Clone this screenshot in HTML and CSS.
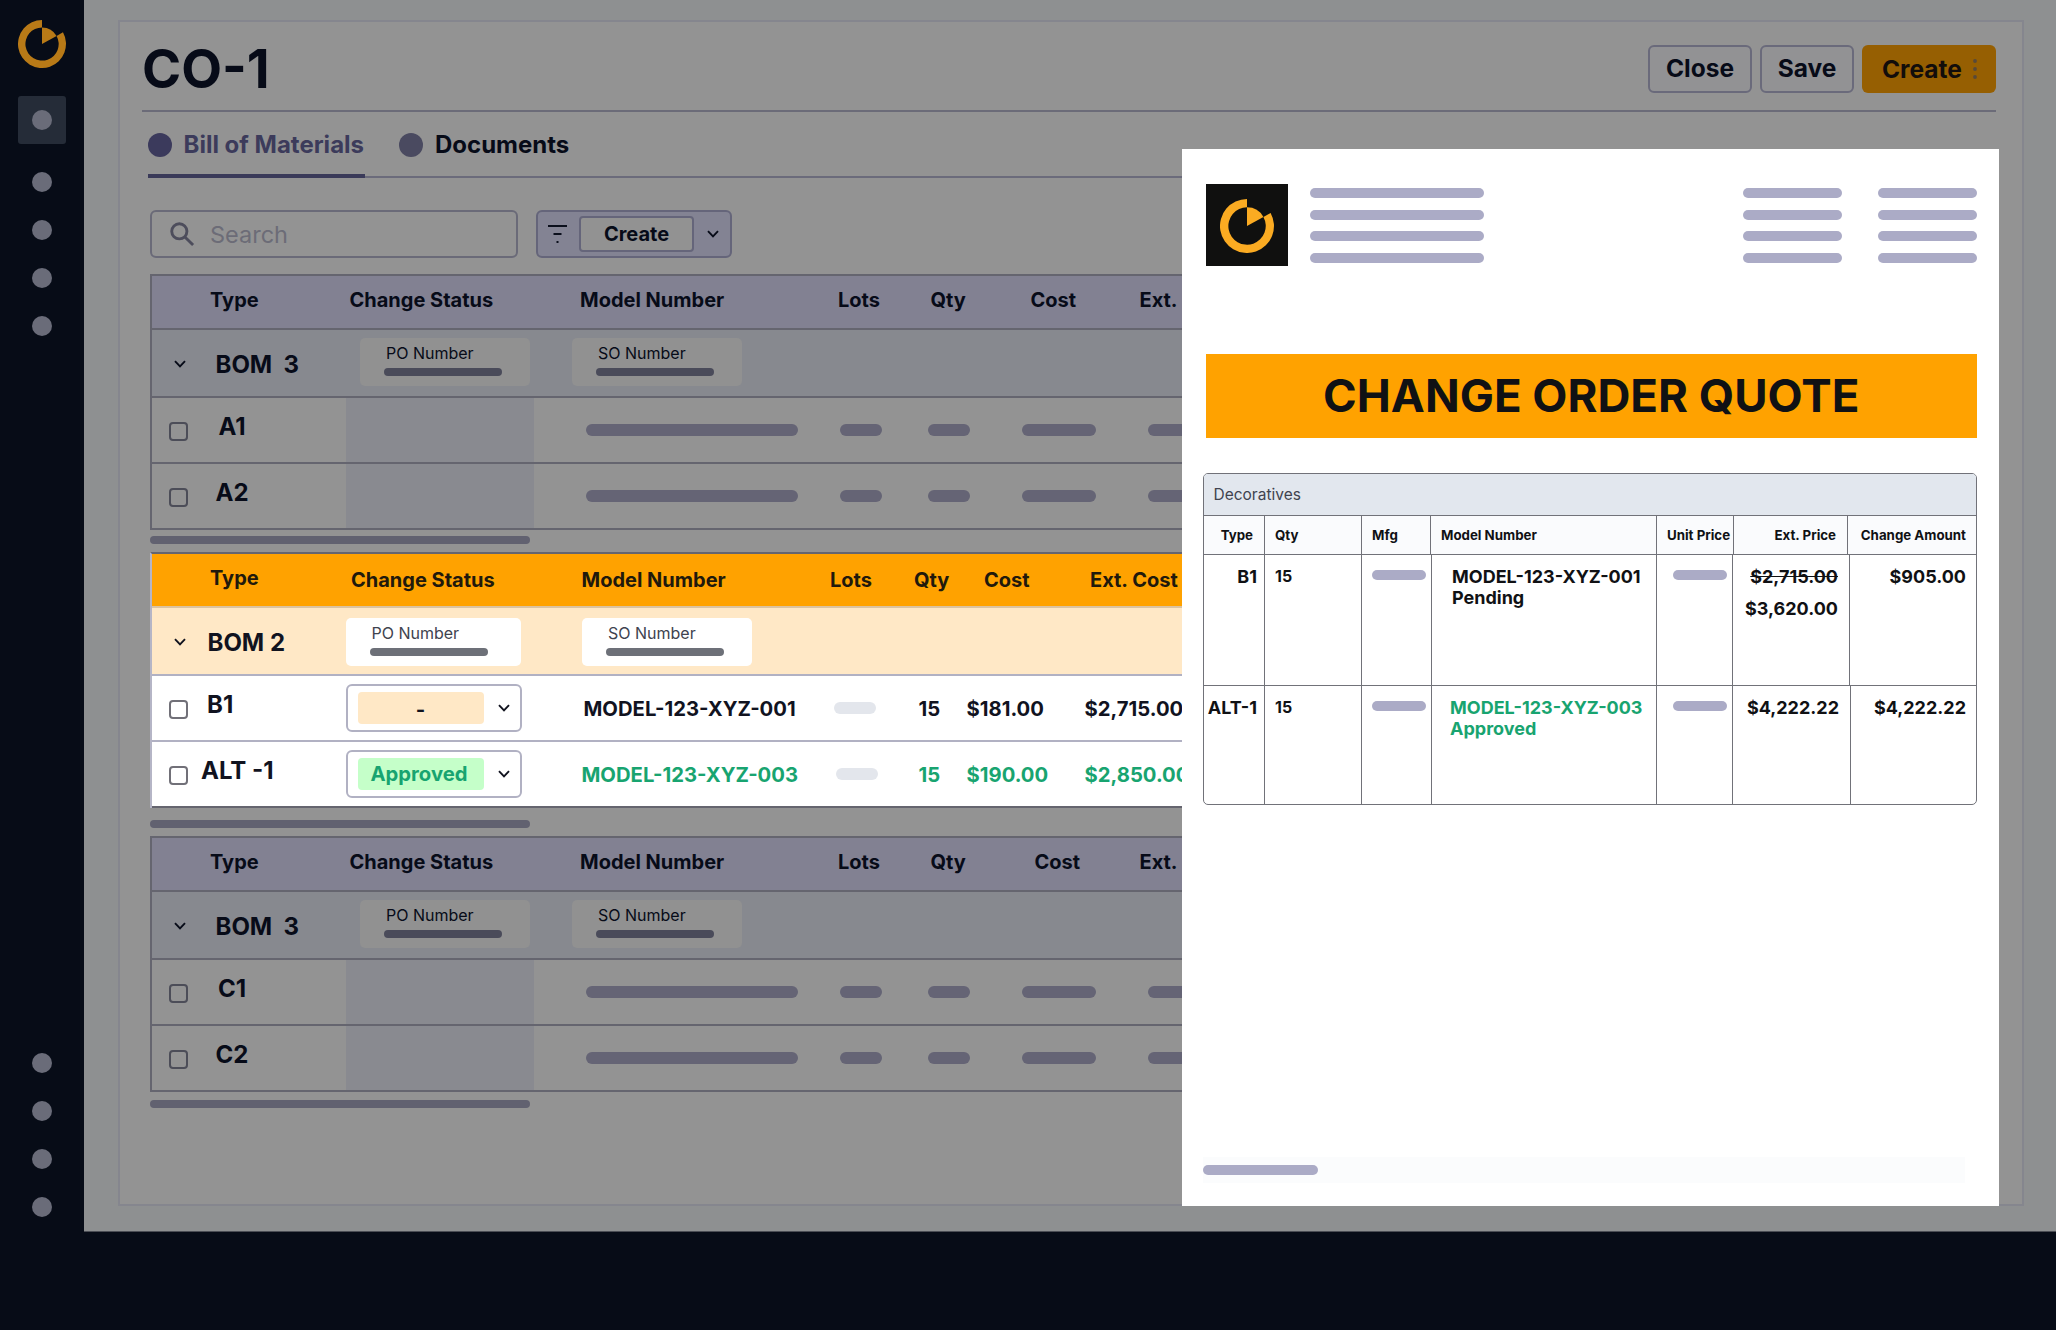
FILE: index.html
```html
<!DOCTYPE html>
<html lang="en">
<head>
    <meta charset="UTF-8">
    <meta name="viewport" content="width=device-width, initial-scale=1.0">
    <title>CO-1</title>
    <link rel="stylesheet" href="styles.css">
</head>
<body>
    <!-- Shared icons -->
    <svg class="sprite" width="0" height="0">
        <symbol id="logo" viewBox="0 0 54 54">
            <path d="M50.6 13.9A27 27 0 1 1 27 0V8.3A18.7 18.7 0 1 0 43.4 17.9Z"/>
            <path d="M27 27V8.3A18.7 18.7 0 0 1 43.4 17.9Z"/>
        </symbol>
        <symbol id="chevron" viewBox="0 0 12 8">
            <path d="M1 1.2L6 6.4L11 1.2" fill="none" stroke="currentColor" stroke-width="1.9"/>
        </symbol>
    </svg>

    <div class="app">
        <nav class="sidebar">
            <svg class="logo"><use href="#logo"/></svg>
            <div class="nav-item active"><span class="dot"></span></div>
            <div class="nav-top">
                <span class="dot"></span>
                <span class="dot"></span>
                <span class="dot"></span>
                <span class="dot"></span>
            </div>
            <div class="nav-bottom">
                <span class="dot"></span>
                <span class="dot"></span>
                <span class="dot"></span>
                <span class="dot"></span>
            </div>
        </nav>

        <main class="main">
            <div class="card">
                <header class="header">
                    <h1>CO-1</h1>
                    <div class="actions">
                        <button class="btn btn-close">Close</button>
                        <button class="btn btn-save">Save</button>
                        <button class="btn btn-create">Create
                            <svg class="dots" viewBox="0 0 4 22"><circle cx="2" cy="3" r="1.9"/><circle cx="2" cy="11" r="1.9"/><circle cx="2" cy="19" r="1.9"/></svg>
                        </button>
                    </div>
                </header>

                <div class="tabs">
                    <div class="tab selected"><span class="tab-dot"></span>Bill of Materials</div>
                    <div class="tab"><span class="tab-dot"></span>Documents</div>
                </div>

                <div class="toolbar">
                    <div class="search">
                        <svg class="search-icon" viewBox="0 0 26 26"><circle cx="9.7" cy="9.7" r="7.9"/><path d="M15.5 15.5L24 24"/></svg>
                        <span>Search</span>
                    </div>
                    <div class="filter">
                        <svg class="filter-icon" viewBox="0 0 20 20"><path d="M0 2H19M5.500 10H13.500M8.500 18H10.500"/></svg>
                        <div class="filter-value">Create</div>
                        <svg class="chevron"><use href="#chevron"/></svg>
                    </div>
                </div>

                <section class="bom">
                    <div class="row head">
                        <span>Type</span><span>Change Status</span><span>Model Number</span><span>Lots</span><span>Qty</span><span>Cost</span><span>Ext.</span>
                    </div>
                    <div class="row group">
                        <svg class="chevron"><use href="#chevron"/></svg>
                        <span class="name">BOM  3</span>
                        <div class="number"><span>PO Number</span><i></i></div>
                        <div class="number"><span>SO Number</span><i></i></div>
                    </div>
                    <div class="row item">
                        <span class="check"></span><span class="name">A1</span><span class="blank"></span>
                        <i class="pill"></i><i class="pill"></i><i class="pill"></i><i class="pill"></i><i class="pill"></i>
                    </div>
                    <div class="row item">
                        <span class="check"></span><span class="name">A2</span><span class="blank"></span>
                        <i class="pill"></i><i class="pill"></i><i class="pill"></i><i class="pill"></i><i class="pill"></i>
                    </div>
                </section>
                <div class="scroll"></div>

                <section class="bom current">
                    <div class="row head">
                        <span class="type">Type</span><span>Change Status</span><span>Model Number</span><span>Lots</span><span>Qty</span><span>Cost</span><span>Ext. Cost</span>
                    </div>
                    <div class="row group">
                        <svg class="chevron"><use href="#chevron"/></svg>
                        <span class="name">BOM 2</span>
                        <div class="number po"><span>PO Number</span><i></i></div>
                        <div class="number"><span>SO Number</span><i></i></div>
                    </div>
                    <div class="row item">
                        <span class="check"></span><span class="name">B1</span>
                        <div class="select"><span class="status none">-</span><svg class="chevron"><use href="#chevron"/></svg></div>
                        <span>MODEL-123-XYZ-001</span><i class="pill"></i><span>15</span><span>$181.00</span><span>$2,715.00</span>
                    </div>
                    <div class="row item alt">
                        <span class="check"></span><span class="name">ALT -1</span>
                        <div class="select"><span class="status">Approved</span><svg class="chevron"><use href="#chevron"/></svg></div>
                        <span class="model">MODEL-123-XYZ-003</span><i class="pill"></i><span>15</span><span>$190.00</span><span>$2,850.00</span>
                    </div>
                </section>
                <div class="scroll scroll-current"></div>

                <section class="bom last">
                    <div class="row head">
                        <span>Type</span><span>Change Status</span><span>Model Number</span><span>Lots</span><span>Qty</span><span>Cost</span><span>Ext.</span>
                    </div>
                    <div class="row group">
                        <svg class="chevron"><use href="#chevron"/></svg>
                        <span class="name">BOM  3</span>
                        <div class="number"><span>PO Number</span><i></i></div>
                        <div class="number"><span>SO Number</span><i></i></div>
                    </div>
                    <div class="row item">
                        <span class="check"></span><span class="name">C1</span><span class="blank"></span>
                        <i class="pill"></i><i class="pill"></i><i class="pill"></i><i class="pill"></i><i class="pill"></i>
                    </div>
                    <div class="row item">
                        <span class="check"></span><span class="name">C2</span><span class="blank"></span>
                        <i class="pill"></i><i class="pill"></i><i class="pill"></i><i class="pill"></i><i class="pill"></i>
                    </div>
                </section>
                <div class="scroll scroll-last"></div>
            </div>
        </main>
    </div>

    <!-- Quote preview -->
    <aside class="quote">
        <div class="quote-top">
            <div class="quote-logo"><svg><use href="#logo"/></svg></div>
            <div class="lines lines-wide"><i></i><i></i><i></i><i></i></div>
            <div class="lines lines-right"><i></i><i></i><i></i><i></i></div>
            <div class="lines"><i></i><i></i><i></i><i></i></div>
        </div>
        <h2 class="banner">CHANGE ORDER QUOTE</h2>
        <div class="quote-table">
            <div class="caption">Decoratives</div>
            <div class="quote-row quote-head">
                <div class="type">Type</div><div>Qty</div><div>Mfg</div><div>Model Number</div><div>Unit Price</div><div class="amount">Ext. Price</div><div class="amount">Change Amount</div>
            </div>
            <div class="quote-row first">
                <div class="type">B1</div>
                <div class="qty">15</div>
                <div><i class="bar"></i></div>
                <div class="model">MODEL-123-XYZ-001<br>Pending</div>
                <div class="unit"><i class="bar"></i></div>
                <div class="amount"><s>$2,715.00</s><span class="new-price">$3,620.00</span></div>
                <div class="amount">$905.00</div>
            </div>
            <div class="quote-row second">
                <div class="type">ALT-1</div>
                <div class="qty">15</div>
                <div><i class="bar"></i></div>
                <div class="model approved">MODEL-123-XYZ-003<br>Approved</div>
                <div class="unit"><i class="bar"></i></div>
                <div class="amount">$4,222.22</div>
                <div class="amount">$4,222.22</div>
            </div>
        </div>
        <div class="quote-scroll"><i></i></div>
    </aside>
</body>
</html>
```
FILE: styles.css
```css
* {
    box-sizing: border-box;
}
body {
    margin: 0;
    height: 1330px;
    overflow: hidden;
    position: relative;
    background-color: #070c17;
    color: #070b18;
    font-family: Inter, sans-serif;
    font-weight: 700;
    font-optical-sizing: none;
}
h1, h2 {
    margin: 0;
    font-weight: 700;
}
.sprite {
    display: block;
}
.app {
    display: flex;
    height: 1232px;
}

/* Sidebar */
.sidebar {
    width: 84px;
    padding: 20px 0 15px;
    display: flex;
    flex-direction: column;
    align-items: center;
}
.logo {
    width: 48px;
    height: 48px;
    fill: #b87a17;
}
.nav-item {
    width: 48px;
    height: 48px;
    margin-top: 28px;
    border-radius: 3px;
    background-color: #252c38;
    display: flex;
    align-items: center;
    justify-content: center;
}
.dot {
    width: 20px;
    height: 20px;
    border-radius: 50%;
    background-color: #6a6c79;
}
.nav-top, .nav-bottom {
    display: flex;
    flex-direction: column;
    gap: 28px;
}
.nav-top {
    margin-top: 28px;
}
.nav-bottom {
    margin-top: auto;
}

/* Main card */
.main {
    flex: 1;
    padding: 20px 32px 26px 34px;
    background-color: #8e9091;
    border-bottom: 1px solid #4b4e55;
}
.card {
    height: 1186px;
    border: 2px solid #85868e;
    background-color: #939393;
}
.header {
    display: flex;
    justify-content: space-between;
    height: 90px;
    margin: 0 26px 0 22px;
    border-bottom: 2px solid #6b6b78;
}
.header h1 {
    font-size: 53px;
    line-height: 95px;
}
.actions {
    display: flex;
    gap: 8px;
    padding-top: 23px;
}
.btn {
    height: 48px;
    padding: 0 0 3px;
    border: 2px solid #6a6a7b;
    border-radius: 6px;
    background-color: #929294;
    color: #070b18;
    font: 700 24.500px Inter, sans-serif;
    font-optical-sizing: none;
}
.btn-close {
    width: 104px;
}
.btn-save {
    width: 94px;
}
.btn-create {
    width: 134px;
    padding: 0 0 0 20px;
    border: none;
    background-color: #965f02;
    color: #120d0b;
    display: flex;
    align-items: center;
}
.dots {
    width: 4px;
    height: 22px;
    margin-left: 11px;
    fill: #57493a;
}

.tabs {
    display: flex;
    height: 66px;
    margin: 0 26px 0 27.5px;
    font-size: 24px;
    border-bottom: 2px solid #6b6b7b;
}
.tab {
    display: flex;
    height: 66px;
    align-items: center;
    gap: 12px;
    margin-right: 34px;
    border-bottom: 4px solid transparent;
    padding-top: 3px;
}
.tab.selected {
    width: 217.5px;
    white-space: nowrap;
    color: #3c3b5b;
    border-color: #3a3a59;
}
.tab-dot {
    width: 24px;
    height: 24px;
    border-radius: 50%;
    background-color: #4a4a60;
}
.selected .tab-dot {
    background-color: #3b3a5c;
}

.toolbar {
    display: flex;
    gap: 18px;
    margin: 32px 0 16px 30px;
}
.search {
    display: flex;
    align-items: center;
    gap: 15px;
    width: 368px;
    height: 48px;
    padding-left: 18px;
    border: 2px solid #6a6a78;
    border-radius: 6px;
    color: #6c6c77;
    font-size: 23.500px;
    font-weight: 400;
}
.search-icon {
    width: 25px;
    height: 25px;
    fill: none;
    stroke: #4d4d5c;
    stroke-width: 3;
}
.filter {
    display: flex;
    align-items: center;
    width: 196px;
    height: 48px;
    padding-left: 10px;
    border: 2px solid #65657a;
    border-radius: 6px;
    background-color: #838393;
}
.filter-icon {
    width: 20px;
    height: 20px;
    stroke: #0b0f1c;
    stroke-width: 2;
}
.filter-value {
    width: 115px;
    height: 36px;
    margin: 0 13px 0 11px;
    border: 2px solid #65657a;
    border-radius: 4px;
    background-color: #929292;
    font-size: 20px;
    line-height: 32px;
    text-align: center;
}
.chevron {
    width: 12px;
    height: 8px;
    flex: none;
}

/* Bill of materials tables */
.bom {
    margin: 0 26px 0 30px;
    border: 2px solid #65656f;
    border-bottom: none;
}
.row {
    display: grid;
    align-items: center;
    height: 66px;
    border-bottom: 2px solid #65656f;
    white-space: pre;
    overflow: hidden;
}
.head {
    height: 54px;
    padding: 0 0 4px 58px;
    grid-template-columns: 139.5px 230.5px 258px 92.5px 100px 109px auto;
    background-color: #828192;
    font-size: 20px;
}
.last .head {
    grid-template-columns: 139.5px 230.5px 258px 92.5px 104px 105px auto;
}
.group {
    height: 68px;
    padding-left: 22px;
    grid-template-columns: 41.5px 144.5px 212px auto;
    background-color: #87898f;
}
.group .chevron {
    width: 12px;
    margin-top: 2px;
}
.name {
    font-size: 24px;
}
.group .name {
    padding-top: 3px;
}
.number {
    width: 170px;
    height: 48px;
    margin-top: -3px;
    padding: 5px 0 0 24px;
    border-radius: 5px;
    background-color: #919191;
    font-size: 16px;
    font-weight: 400;
    line-height: 20px;
}
.number span {
    display: block;
    padding-left: 2px;
}
.number i {
    display: block;
    width: 118px;
    height: 8px;
    margin-top: 5px;
    border-radius: 4px;
    background-color: #4a4b5a;
}
.item {
    padding-left: 17px;
    grid-template-columns: 33px 143.5px 240.5px 254px 88px 94px 126px auto;
}
.check {
    width: 19px;
    height: 19px;
    margin-top: 2px;
    border: 2px solid #4c4d58;
    border-radius: 4px;
}
.item .name {
    width: 60px;
    margin-top: -8px;
    text-align: center;
}
.blank {
    align-self: stretch;
    width: 188.5px;
    background-color: #898a90;
}
.pill {
    width: 42px;
    height: 12px;
    border-radius: 6px;
    background-color: #656475;
}
.blank + .pill {
    width: 212px;
}
.pill:nth-child(7), .pill:nth-child(8) {
    width: 74px;
}
.scroll {
    width: 380px;
    height: 8px;
    margin: 6px 0 8px 30px;
    border-radius: 4px;
    background-color: #616170;
}
.scroll-current {
    margin-top: 12px;
}
.scroll-last {
    margin-top: 8px;
}

/* Highlighted table */
.current {
    border-left-color: #b5b5c6;
    background-color: #fff;
    color: #11131f;
}
.current .row {
    border-color: #b1b1c3;
}
.current .row:last-child {
    border-color: #65656f;
}
.current .head {
    padding-bottom: 0;
    grid-template-columns: 141px 230.5px 248.5px 84px 70px 106px auto;
    background-color: #ffa200;
    border-color: #dcc3a0;
    color: #21190c;
}
.head .type {
    margin-top: -4px;
}
.current .group {
    grid-template-columns: 33.5px 138px 236.5px auto;
    background-color: #ffe8c6;
}
.current .number {
    margin-top: 2px;
    background-color: #fff;
    color: #40434f;
}
.current .po {
    width: 175px;
}
.current .number i {
    background-color: #6d7078;
}
.current .item {
    grid-template-columns: 38px 138.5px 238px 250.5px 84.500px 48px 118px auto;
    font-size: 20.250px;
}
.current .check {
    border-color: #717078;
}
.current .item .name {
    text-align: left;
}
.select {
    display: flex;
    align-items: center;
    width: 176px;
    height: 48px;
    padding-left: 10px;
    border: 2px solid #b1b1c3;
    border-radius: 6px;
}
.status {
    width: 126px;
    height: 32px;
    margin-right: 14px;
    padding-right: 3px;
    border-radius: 4px;
    background-color: #c5ffc9;
    color: #16a36d;
    line-height: 32px;
    text-align: center;
}
.status.none {
    padding: 2px 0 0;
    background-color: #ffe8c6;
    color: #11131f;
}
.current .pill {
    background-color: #e3e6ec;
}
.alt > span, .alt .status {
    color: #18a470;
}
.alt > .name {
    margin-left: -6px;
    color: #11131f;
}
.alt .model {
    margin-left: -2px;
}
.alt .pill {
    margin-left: 2px;
}

/* Quote preview */
.quote {
    position: absolute;
    left: 1182px;
    top: 149px;
    width: 816.5px;
    height: 1057px;
    padding: 35px 21.5px 0 21px;
    display: flex;
    flex-direction: column;
    background-color: #fff;
    color: #101114;
}
.quote i {
    display: block;
    background-color: #ababc6;
    border-radius: 5px;
}
.quote-top {
    display: flex;
    height: 82px;
    margin-left: 2.5px;
}
.quote-logo {
    width: 82px;
    height: 82px;
    margin-right: 22px;
    background-color: #10100f;
    display: flex;
    align-items: center;
    justify-content: center;
}
.quote-logo svg {
    width: 54px;
    height: 54px;
    margin-top: 2px;
    fill: #fbab22;
}
.lines {
    width: 99px;
    padding-top: 4px;
    display: flex;
    flex-direction: column;
    gap: 11.5px;
}
.lines i {
    height: 10px;
}
.lines-wide {
    width: 174.5px;
}
.lines-right {
    margin: 0 36px 0 auto;
}
.banner {
    height: 84px;
    margin: 88px 0 35px 2.5px;
    background-color: #ffa200;
    font-size: 45.600px;
    line-height: 84px;
    text-align: center;
}
.quote-table {
    border: 1.5px solid #717279;
    border-radius: 5px;
    overflow: hidden;
}
.caption {
    height: 41px;
    padding-left: 9.5px;
    background-color: #e2e7ee;
    color: #40434f;
    font-size: 15.500px;
    font-weight: 400;
    line-height: 41px;
}
.quote-row {
    display: grid;
    height: 131px;
    grid-template-columns: 61px 97px 70px 225px 76px 117px auto;
    border-top: 1px solid #717279;
    font-size: 18px;
    line-height: 21px;
}
.quote-row > div {
    padding: 11px 0 0 10px;
    border-right: 1px solid #717279;
}
.quote-row > div:last-child {
    border-right: none;
}
.quote-row .type {
    padding: 11px 7px 0 0;
    text-align: right;
    white-space: nowrap;
}
.quote-row .amount {
    padding-right: 11px;
    text-align: right;
}
.quote-row .amount:last-child {
    padding-right: 10px;
}
.quote-head {
    height: 39px;
    grid-template-columns: 61px 97px 69px 226px 77px 114px auto;
    background-color: #fafbfd;
    font-size: 13.300px;
    line-height: 38px;
    white-space: nowrap;
}
.quote-head > div {
    padding-top: 0;
}
.quote-head .type {
    padding: 0 11px 0 0;
}
.quote-head .amount {
    padding-top: 0;
}
.quote-row.second {
    height: 119px;
    grid-template-columns: 61px 97px 70px 225px 76px 118px auto;
}
.quote-row .qty {
    font-size: 16px;
}
.quote-row .model {
    padding-left: 20px;
}
.quote-row .approved {
    padding-left: 18px;
    color: #18a470;
}
.quote-row .unit {
    padding-left: 16px;
}
.bar {
    width: 54px;
    height: 10px;
    margin-top: 4px;
}
.new-price {
    display: block;
    margin-top: 11px;
}
.quote-scroll {
    width: 762px;
    height: 26px;
    margin: auto 0 23px;
    padding-top: 8px;
    background-color: #fbfcfd;
}
.quote-scroll i {
    width: 115px;
    height: 10px;
}
```
